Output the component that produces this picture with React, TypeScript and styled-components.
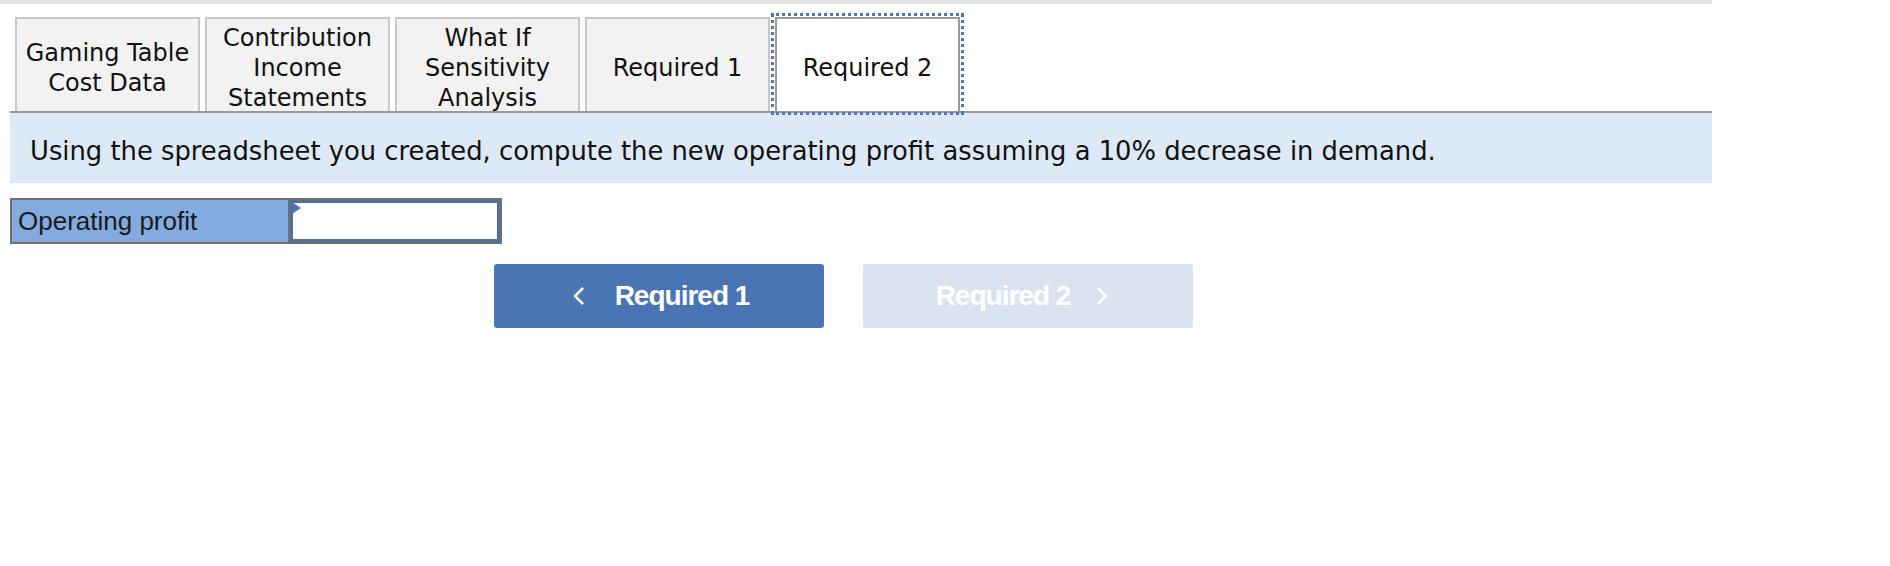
import styled, { createGlobalStyle } from "styled-components";

const GlobalStyle = createGlobalStyle`
  html, body {
    margin: 0;
    padding: 0;
    background: #fff;
  }
`;

const Page = styled.div`
  width: 1712px;
`;

const TopBar = styled.div`
  height: 4px;
  background: #e1e1e1;
`;

const Content = styled.div`
  margin-left: 10px;
`;

const TabStrip = styled.div`
  display: flex;
  align-items: flex-end;
  gap: 5px;
  margin-top: 13px;
  padding-left: 5px;
  border-bottom: 2px solid #999;
`;

const Tab = styled.div<{ $active?: boolean }>`
  box-sizing: border-box;
  width: 185px;
  height: 94px;
  display: flex;
  align-items: center;
  justify-content: center;
  padding-top: 5px;
  text-align: center;
  font-family: "DejaVu Sans", Verdana, sans-serif;
  font-size: 24px;
  line-height: 30px;
  color: #111;
  background: ${(p) => (p.$active ? "#fff" : "#f2f2f2")};
  border: 2px solid ${(p) => (p.$active ? "#9a9a9a" : "#c8c8c8")};
  border-bottom: none;
  outline: ${(p) => (p.$active ? "3px dotted #5076b0" : "none")};
  outline-offset: 1px;
`;

const Instruction = styled.div`
  box-sizing: border-box;
  height: 70px;
  display: flex;
  align-items: center;
  padding: 6px 0 0 20px;
  background: #dde9f7;
  font-family: "DejaVu Sans", Verdana, sans-serif;
  font-size: 25.8px;
  color: #111;
`;

const AnswerRow = styled.div`
  display: flex;
  width: 492px;
  height: 46px;
  margin-top: 15px;
  box-sizing: border-box;
  border: 2px solid #707070;
`;

const Label = styled.div`
  box-sizing: border-box;
  width: 278px;
  display: flex;
  align-items: center;
  padding-left: 6px;
  background: #84abe0;
  font-family: "Liberation Sans", Arial, sans-serif;
  font-size: 26px;
  color: #1a1a1a;
  border-right: 2px solid #707070;
`;

const InputCell = styled.div`
  position: relative;
  flex: 1;
  box-sizing: border-box;
  border: 3px solid #4f6f9f;
  background: #fff;

  &::before {
    content: "";
    position: absolute;
    left: -1px;
    top: -1px;
    border-left: 9px solid #4a74b4;
    border-top: 6px solid transparent;
    border-bottom: 6px solid transparent;
  }
`;

const NavRow = styled.div`
  display: flex;
  gap: 39px;
  margin-top: 20px;
  padding-left: 484px;
`;

const NavButton = styled.button<{ $disabled?: boolean }>`
  box-sizing: border-box;
  width: 330px;
  height: 64px;
  display: flex;
  align-items: center;
  justify-content: center;
  gap: ${(p) => (p.$disabled ? "26px" : "30px")};
  border: none;
  border-radius: 3px;
  background: ${(p) => (p.$disabled ? "#dae4f0" : "#4a75b4")};
  color: #fff;
  font-family: "Liberation Sans", Arial, sans-serif;
  font-weight: bold;
  font-size: 28px;
  letter-spacing: -1px;
  cursor: ${(p) => (p.$disabled ? "default" : "pointer")};
  padding: ${(p) => (p.$disabled ? "0 12px 0 0" : "0 0 0 4px")};
`;

const Chevron = ({ dir }: { dir: "left" | "right" }) => (
  <svg width="12" height="20" viewBox="0 0 12 20">
    <polyline
      points={dir === "left" ? "10,2 2,10 10,18" : "2,2 10,10 2,18"}
      fill="none"
      stroke="#fff"
      strokeWidth="2.5"
    />
  </svg>
);

const tabs = [
  ["Gaming Table", "Cost Data"],
  ["Contribution", "Income", "Statements"],
  ["What If", "Sensitivity", "Analysis"],
  ["Required 1"],
  ["Required 2"],
];

export default function App() {
  return (
    <Page>
      <GlobalStyle />
      <TopBar />
      <Content>
        <TabStrip>
          {tabs.map((lines, i) => (
            <Tab key={i} $active={i === 4}>
              <span>
                {lines.map((l, j) => (
                  <div key={j}>{l}</div>
                ))}
              </span>
            </Tab>
          ))}
        </TabStrip>
        <Instruction>
          Using the spreadsheet you created, compute the new operating profit assuming a 10% decrease in demand.
        </Instruction>
        <AnswerRow>
          <Label>Operating profit</Label>
          <InputCell />
        </AnswerRow>
        <NavRow>
          <NavButton>
            <Chevron dir="left" />
            <span>Required 1</span>
          </NavButton>
          <NavButton $disabled>
            <span>Required 2</span>
            <Chevron dir="right" />
          </NavButton>
        </NavRow>
      </Content>
    </Page>
  );
}
